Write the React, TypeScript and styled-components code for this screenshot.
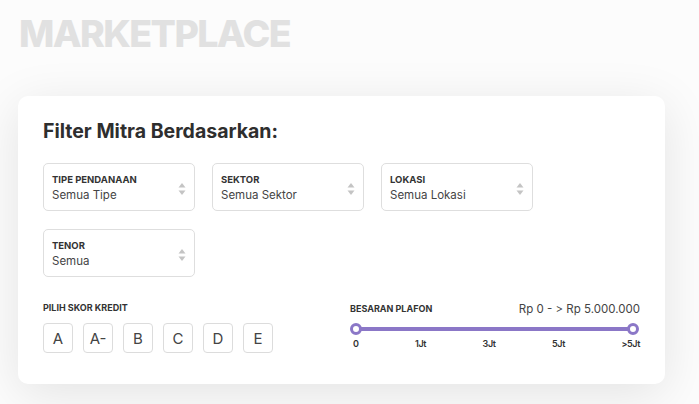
import React from 'react';
import styled, { createGlobalStyle } from 'styled-components';

const GlobalStyle = createGlobalStyle`
    body {
        margin: 0;
        background: #fcfcfc;
        font-family: Inter, "Open Sans", sans-serif;
        color: #333;
    }
`;

const Page = styled.div`
    width: 699px;
    height: 404px;
    overflow: hidden;
    padding: 12px 34px 0 18px;
    box-sizing: border-box;
`;

const PageTitle = styled.h1`
    margin: 0 0 0 1px;
    font-size: 37.5px;
    font-weight: 800;
    letter-spacing: -1.6px;
    color: #e1e1e1;
    line-height: 44px;
`;

const Card = styled.div`
    margin-top: 40px;
    width: 647px;
    height: 288px;
    box-sizing: border-box;
    background: #fff;
    border-radius: 10px;
    box-shadow: 0 10px 50px rgba(0, 0, 0, 0.1);
    padding: 22px 25px 0 25px;
`;

const CardTitle = styled.h2`
    margin: 0 0 19px 0;
    font-size: 19.5px;
    font-weight: 700;
    color: #2e2e2e;
    line-height: 26px;
`;

const SelectGrid = styled.div`
    display: grid;
    grid-template-columns: repeat(3, 152px);
    column-gap: 17px;
    row-gap: 18px;
`;

const SelectBox = styled.div`
    position: relative;
    height: 48px;
    box-sizing: border-box;
    border: 1px solid #dedede;
    border-radius: 5px;
    padding: 10px 8px 0 8px;
    display: flex;
    flex-direction: column;
    gap: 2px;
`;

const SelectLabel = styled.span`
    font-size: 9.5px;
    font-weight: 700;
    color: #333;
    line-height: 12px;
`;

const SelectValue = styled.span`
    font-size: 11.5px;
    color: #444;
    line-height: 15px;
`;

const Arrows = styled.svg`
    position: absolute;
    right: 8px;
    top: 18px;
`;

const BottomRow = styled.div`
    display: flex;
    justify-content: space-between;
    margin-top: 25px;
`;

const Group = styled.div<{ width?: number }>`
    display: flex;
    flex-direction: column;
    width: ${p => (p.width ? `${p.width}px` : 'auto')};
`;

const SmallLabel = styled.span`
    font-size: 9px;
    font-weight: 700;
    color: #333;
    line-height: 12px;
`;

const ScoreRow = styled.div`
    display: flex;
    gap: 10px;
    margin-top: 9px;
`;

const ScoreButton = styled.button`
    width: 30px;
    height: 30px;
    box-sizing: border-box;
    border: 1px solid #dcdcdc;
    border-radius: 4px;
    background: #fff;
    font-family: inherit;
    font-size: 15px;
    color: #444;
    padding: 0;
    display: flex;
    align-items: center;
    justify-content: center;
`;

const PlafonHeader = styled.div`
    display: flex;
    justify-content: space-between;
    align-items: center;
`;

const Range = styled.span`
    font-size: 11.5px;
    color: #444;
    line-height: 14px;
`;

const Track = styled.div`
    position: relative;
    margin: 11px 6px 0 5px;
    height: 4px;
    background: #8b77c7;
    border-radius: 2px;
`;

const Handle = styled.span<{ side: 'left' | 'right' }>`
    position: absolute;
    top: -4px;
    ${p => p.side}: -5px;
    width: 6px;
    height: 6px;
    border: 3px solid #8b77c7;
    background: #fff;
    border-radius: 50%;
`;

const Ticks = styled.div`
    display: flex;
    justify-content: space-between;
    margin-top: 7px;
    padding-left: 3px;
`;

const Tick = styled.span`
    font-size: 9px;
    font-weight: 600;
    color: #333;
    letter-spacing: -0.4px;
`;

const selects = [
    { label: 'TIPE PENDANAAN', value: 'Semua Tipe' },
    { label: 'SEKTOR', value: 'Semua Sektor' },
    { label: 'LOKASI', value: 'Semua Lokasi' },
    { label: 'TENOR', value: 'Semua' },
];

const scores = ['A', 'A-', 'B', 'C', 'D', 'E'];
const ticks = ['0', '1Jt', '3Jt', '5Jt', '>5Jt'];

const App = () => {
    return (
        <Page>
            <GlobalStyle />
            <PageTitle>MARKETPLACE</PageTitle>
            <Card>
                <CardTitle>Filter Mitra Berdasarkan:</CardTitle>
                <SelectGrid>
                    {selects.map(s => (
                        <SelectBox key={s.label}>
                            <SelectLabel>{s.label}</SelectLabel>
                            <SelectValue>{s.value}</SelectValue>
                            <Arrows width="8" height="14" viewBox="0 0 8 14">
                                <path d="M4 1L7.5 5.5H0.5Z" fill="#c4c4c4" />
                                <path d="M4 13L7.5 8.5H0.5Z" fill="#c4c4c4" />
                            </Arrows>
                        </SelectBox>
                    ))}
                </SelectGrid>
                <BottomRow>
                    <Group>
                        <SmallLabel>PILIH SKOR KREDIT</SmallLabel>
                        <ScoreRow>
                            {scores.map(s => (
                                <ScoreButton key={s}>{s}</ScoreButton>
                            ))}
                        </ScoreRow>
                    </Group>
                    <Group width={290}>
                        <PlafonHeader>
                            <SmallLabel>BESARAN PLAFON</SmallLabel>
                            <Range>Rp 0 - &gt; Rp 5.000.000</Range>
                        </PlafonHeader>
                        <Track>
                            <Handle side="left" />
                            <Handle side="right" />
                        </Track>
                        <Ticks>
                            {ticks.map(t => (
                                <Tick key={t}>{t}</Tick>
                            ))}
                        </Ticks>
                    </Group>
                </BottomRow>
            </Card>
        </Page>
    );
};

export default App;
